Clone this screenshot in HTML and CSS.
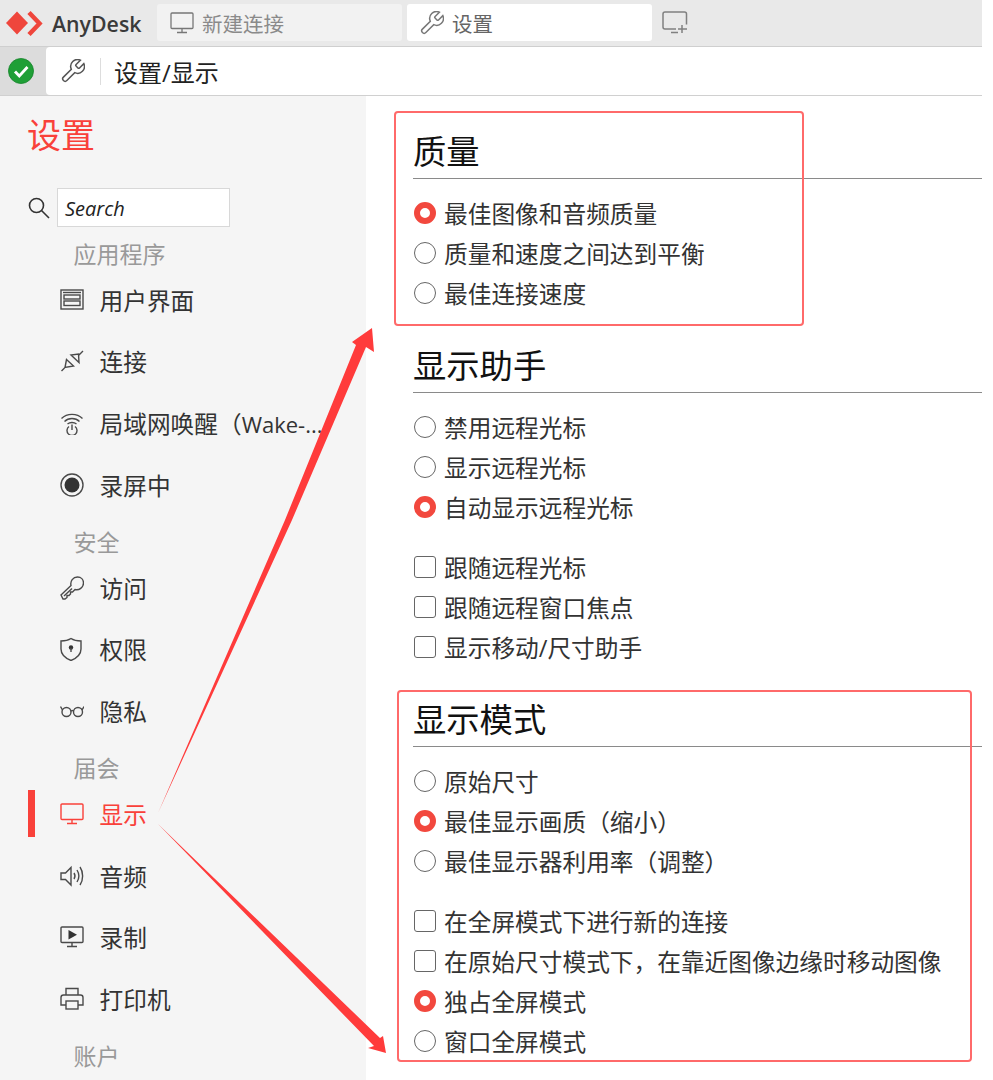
FILE: index.html
```html
<!DOCTYPE html>
<html lang="zh-CN">
<head>
<meta charset="utf-8">
<title>AnyDesk 设置</title>
<link rel="stylesheet" href="styles.css">
</head>
<body>
<div class="app">
  <header class="tabbar">
    <div class="brand">
      <svg class="logo" viewBox="0 0 44 42"><path class="logo-fill" d="M6 21 17 9.500 28 21 17 32.500Z"/><path class="logo-line" d="M29 10.500 39.500 21.500 29 32.500"/></svg>
      <span class="brand-name">AnyDesk</span>
    </div>
    <div class="tab">
      <svg class="tab-icon" viewBox="0 0 24 24"><rect x="1" y="2" width="22" height="15.500" rx="1"/><path d="M12 17.500V21M7 21.500H17"/></svg>
      <span>新建连接</span>
    </div>
    <div class="tab tab-active">
      <svg class="tab-icon" viewBox="1.500 1.500 21 21"><path d="M14.700 6.300a1 1 0 0 0 0 1.400l1.600 1.600a1 1 0 0 0 1.400 0l3.770-3.770a6 6 0 0 1-7.940 7.940l-6.910 6.910a2.120 2.120 0 0 1-3-3l6.910-6.910a6 6 0 0 1 7.940-7.940l-3.760 3.760z"/></svg>
      <span>设置</span>
    </div>
    <svg class="new-tab" viewBox="0 0 26 24"><path d="M24.500 13.500V3a2 2 0 0 0-2-2H3A2 2 0 0 0 1 3v13a2 2 0 0 0 2 2h11"/><path d="M9 21.500H16M20 14V22M16 18H25"/></svg>
  </header>

  <div class="addressbar">
    <div class="status">
      <svg class="status-icon" viewBox="0 0 26 26"><circle cx="13" cy="13" r="12.500"/><path d="M7 13.500 11.300 18 19.500 9"/></svg>
    </div>
    <div class="address">
      <svg class="address-icon" viewBox="1.500 1.500 21 21"><path d="M14.700 6.300a1 1 0 0 0 0 1.400l1.600 1.600a1 1 0 0 0 1.400 0l3.770-3.770a6 6 0 0 1-7.940 7.940l-6.910 6.910a2.120 2.120 0 0 1-3-3l6.910-6.910a6 6 0 0 1 7.940-7.940l-3.760 3.760z"/></svg>
      <span class="address-sep"></span>
      <span class="address-text">设置/显示</span>
    </div>
  </div>

  <div class="content">
    <nav class="sidebar">
      <h1 class="side-title">设置</h1>
      <div class="search">
        <svg class="search-icon" viewBox="0 0 22 22"><circle cx="8.500" cy="8.500" r="7"/><path d="M13.500 13.500 21 21"/></svg>
        <div class="search-box">Search</div>
      </div>

      <div class="side-label">应用程序</div>
      <a class="item"><svg class="ico" viewBox="0 0 24 24"><rect x="1" y="2" width="22" height="19"/><rect x="4" y="7" width="16" height="4"/><rect x="4" y="13" width="16" height="4.500"/><path d="M3 4.500H21"/></svg><span class="item-text">用户界面</span></a>
      <a class="item"><svg class="ico" viewBox="0 0 24 24"><path d="M1.500 22 6 17.500M6.500 10.500 13.500 17 5 18.500ZM23 2 18.500 6.500M11 6 19 13.500 18.500 5Z"/></svg><span class="item-text">连接</span></a>
      <a class="item"><svg class="ico" viewBox="0 0 24 24"><path d="M1.500 7.500C7 2 17 2 22.500 7.500M4.500 10.500C8.500 6.500 15.500 6.500 19.500 10.500M7.500 13C10 11 14 11 16.500 13M9 15.500a5 5 0 1 0 6 0M12 13.500V19"/></svg><span class="item-text">局域网唤醒（<span class="item-latin">Wake-...</span></span></a>
      <a class="item"><svg class="ico" viewBox="0 0 24 24"><circle cx="12" cy="12" r="11"/><circle class="ico-fill" cx="12" cy="12" r="7.500"/></svg><span class="item-text">录屏中</span></a>

      <div class="side-label">安全</div>
      <a class="item"><svg class="ico" viewBox="0 0 24 24"><path d="M1 19 11 9.500C10 5 13 1 17.500 1 21 1 23.500 3.500 23.500 7 23.500 11.500 19 14.500 15 13.500L12.500 16H10.500V18L9 19.500H7V21.500L5 23H3Z"/><path d="M4 20 12 12.500"/></svg><span class="item-text">访问</span></a>
      <a class="item"><svg class="ico" viewBox="0 0 24 24"><path d="M11 1.500C14 3.500 17 4 21 4V12C21 17 17 21 11 23.500 5 21 1 17 1 12V4C5 4 8 3.500 11 1.500Z"/><circle class="ico-fill" cx="11" cy="10.500" r="2.200"/><path d="M11 11V15"/></svg><span class="item-text">权限</span></a>
      <a class="item"><svg class="ico" viewBox="0 0 24 24"><circle cx="6.500" cy="13" r="4.500"/><circle cx="18" cy="13" r="4.500"/><path d="M11 12.500C11.500 11 13 11 13.500 12.500M0.500 7.500 2.500 11M24 7.500 22 11"/></svg><span class="item-text">隐私</span></a>

      <div class="side-label">届会</div>
      <a class="item item-active"><svg class="ico" viewBox="0 0 24 24"><rect x="1" y="2" width="22" height="15.500" rx="1"/><path d="M12 17.500V21M7 21.500H17"/></svg><span class="item-text">显示</span></a>
      <a class="item"><svg class="ico" viewBox="0 0 24 24"><path d="M1 9H5.500L11 3.500V21L5.500 15.500H1Z"/><path d="M14 9C15.200 10.800 15.200 13.200 14 15M17 6C19.200 9.500 19.200 14.500 17 18M20 3C23.500 8 23.500 16 20 21"/></svg><span class="item-text">音频</span></a>
      <a class="item"><svg class="ico" viewBox="0 0 24 24"><rect x="1" y="2" width="22" height="15.500" rx="1"/><path d="M12 17.500V21M7 21.500H17"/><path class="ico-fill" d="M8.500 5 17 9.800 8.500 14.500Z"/></svg><span class="item-text">录制</span></a>
      <a class="item"><svg class="ico" viewBox="0 0 24 24"><path d="M6 8V1.500H18V8M6 18H1V10.500A2.500 2.500 0 0 1 3.500 8H20.500A2.500 2.500 0 0 1 23 10.500V18H18"/><rect x="6" y="14" width="12" height="8"/></svg><span class="item-text">打印机</span></a>

      <div class="side-label">账户</div>
    </nav>

    <main class="main">
      <section class="section">
        <h2 class="section-title">质量</h2>
        <div class="group">
          <label class="opt"><i class="radio radio-on"></i>最佳图像和音频质量</label>
          <label class="opt"><i class="radio"></i>质量和速度之间达到平衡</label>
          <label class="opt"><i class="radio"></i>最佳连接速度</label>
        </div>
      </section>
      <section class="section">
        <h2 class="section-title">显示助手</h2>
        <div class="group">
          <label class="opt"><i class="radio"></i>禁用远程光标</label>
          <label class="opt"><i class="radio"></i>显示远程光标</label>
          <label class="opt"><i class="radio radio-on"></i>自动显示远程光标</label>
        </div>
        <div class="group">
          <label class="opt"><i class="check"></i>跟随远程光标</label>
          <label class="opt"><i class="check"></i>跟随远程窗口焦点</label>
          <label class="opt"><i class="check"></i>显示移动/尺寸助手</label>
        </div>
      </section>
      <section class="section">
        <h2 class="section-title">显示模式</h2>
        <div class="group">
          <label class="opt"><i class="radio"></i>原始尺寸</label>
          <label class="opt"><i class="radio radio-on"></i>最佳显示画质（缩小）</label>
          <label class="opt"><i class="radio"></i>最佳显示器利用率（调整）</label>
        </div>
        <div class="group">
          <label class="opt"><i class="check"></i>在全屏模式下进行新的连接</label>
          <label class="opt"><i class="check"></i>在原始尺寸模式下，在靠近图像边缘时移动图像</label>
          <label class="opt"><i class="radio radio-on"></i>独占全屏模式</label>
          <label class="opt"><i class="radio"></i>窗口全屏模式</label>
        </div>
      </section>
    </main>
  </div>
</div>

<div class="mark mark-quality"></div>
<div class="mark mark-mode"></div>
<svg class="arrows" viewBox="0 0 993 1080">
  <path d="M158 813 285 520 356 345 352 342 372 328 374 352 366 347 292 520Z"/>
  <path d="M158 824 380 1038 383 1036 386 1053 368 1048 374 1046Z"/>
</svg>
</body>
</html>
```

FILE: styles.css
```css
* { box-sizing: border-box; }
html, body { margin: 0; height: 1080px; overflow: hidden; background: #fff; }
body {
  position: relative;
  font-family: "Open Sans", "Noto Sans CJK SC", sans-serif;
  color: #333;
}

.app { width: 982px; height: 1080px; display: flex; flex-direction: column; overflow: hidden; }

/* tab bar */
.tabbar {
  height: 47px;
  flex: none;
  display: flex;
  align-items: flex-start;
  background: #e9e9e9;
  border-bottom: 1px solid #cfcfcf;
}
.brand { width: 157px; height: 46px; display: flex; align-items: center; flex: none; }
.logo { width: 44px; height: 42px; flex: none; }
.logo-fill { fill: #ef463c; }
.logo-line { fill: none; stroke: #ef463c; stroke-width: 4.500; }
.brand-name { font-size: 21.300px; font-weight: 600; color: #3a3a3a; margin-left: 8px; }
.tab {
  width: 245px;
  height: 37px;
  margin-top: 4px;
  margin-right: 5px;
  padding-left: 13px;
  display: flex;
  align-items: center;
  gap: 8px;
  background: #f2f2f2;
  border-radius: 3px;
  font-size: 20.500px;
  color: #8a8a8a;
  flex: none;
}
.tab-active { background: #fff; color: #666; }
.tab-icon { width: 24px; height: 24px; fill: none; stroke: #777; stroke-width: 1.300; flex: none; }
.new-tab { width: 26px; height: 24px; margin: 11px 0 0 5px; fill: none; stroke: #808080; stroke-width: 1.500; flex: none; }

/* address bar */
.addressbar { height: 49px; flex: none; display: flex; background: #dcdcdc; border-bottom: 1px solid #d0d0d0; }
.status { width: 46px; display: flex; align-items: center; padding-left: 8px; flex: none; }
.status-icon { width: 26px; height: 26px; }
.status-icon circle { fill: #1f9f36; stroke: #14842a; stroke-width: 0.800; }
.status-icon path { fill: none; stroke: #fff; stroke-width: 2.800; }
.address {
  flex: 1;
  display: flex;
  align-items: center;
  background: #fff;
  border-top-left-radius: 4px;
  border-bottom-left-radius: 4px;
}
.address-icon { width: 24px; height: 24px; margin-left: 15px; fill: none; stroke: #555; stroke-width: 1.300; flex: none; }
.address-sep { width: 1px; height: 27px; background: #ddd; margin-left: 15px; flex: none; }
.address-text { font-size: 24px; color: #222; margin-left: 13px; }

/* body */
.content { flex: 1; display: flex; min-height: 0; }

.sidebar { width: 366px; flex: none; background: #f5f5f5; padding-top: 17px; overflow: hidden; }
.side-title { margin: 0 0 0 27px; font-size: 34px; line-height: 44px; font-weight: 400; color: #f9413a; }
.search { display: flex; align-items: center; margin: 31px 0 1px 28px; height: 39px; }
.search-icon { width: 22px; height: 22px; fill: none; stroke: #333; stroke-width: 1.600; flex: none; }
.search-box {
  width: 173px;
  height: 39px;
  margin-left: 7px;
  padding-left: 7px;
  background: #fff;
  border: 1px solid #d8d8d8;
  font-size: 20px;
  line-height: 39px;
  font-style: italic;
  color: #222;
}
.side-label { height: 41.330px; padding: 10px 0 0 73.500px; font-size: 23px; line-height: 32px; color: #999; }
.item {
  position: relative;
  height: 61.670px;
  padding: 0 0 1px 60px;
  display: flex;
  align-items: center;
  font-size: 23.700px;
  color: #333;
}
.item-text { margin-left: 15.500px; white-space: nowrap; }
.item-latin { font-size: 22px; }
.ico { width: 24px; height: 24px; fill: none; stroke: #4a4a4a; stroke-width: 1.400; flex: none; }
.ico-fill { fill: #333; stroke: none; }
.item-active { color: #f9413a; }
.item-active .ico { stroke: #f9413a; }
.item-active::before {
  content: "";
  position: absolute;
  left: 28px;
  top: 6px;
  width: 7px;
  height: 47px;
  background: #f9413a;
}

.main { flex: 1; padding: 30px 0 0 47px; overflow: hidden; }
.section { margin-bottom: 27px; }
.section-title {
  margin: 0 0 14px;
  height: 53px;
  font-size: 33.300px;
  line-height: 51px;
  font-weight: 400;
  color: #111;
  border-bottom: 1px solid #8a8a8a;
}
.group { margin-bottom: 20px; }
.group:last-child { margin-bottom: 0; }
.opt { height: 40px; display: flex; align-items: center; font-size: 23.700px; color: #333; white-space: nowrap; }
.radio, .check { width: 22px; height: 22px; margin: -1px 8px 0 1px; background: #fff; border: 1.500px solid #666; flex: none; }
.radio { border-radius: 50%; }
.radio-on { border: 6px solid #f2483e; }
.check { border-radius: 3px; }

/* annotation overlay */
.mark { position: absolute; border: 2px solid #ff6a6a; border-radius: 4px; }
.mark-quality { left: 394px; top: 111px; width: 410px; height: 215px; }
.mark-mode { left: 397px; top: 690px; width: 575px; height: 372px; }
.arrows { position: absolute; left: 0; top: 0; width: 993px; height: 1080px; pointer-events: none; }
.arrows path { fill: #ff3b3b; }
```
